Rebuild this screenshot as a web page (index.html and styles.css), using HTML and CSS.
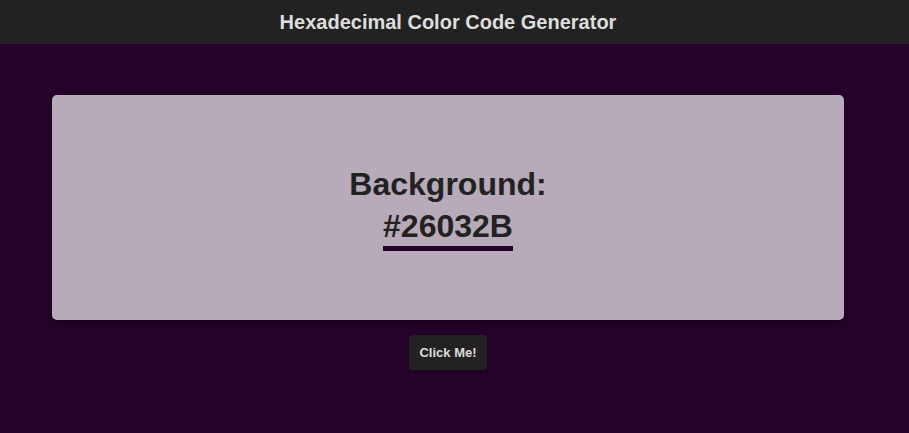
FILE: index.html
```html
<!DOCTYPE html>
<html>
<head>
<meta charset="utf-8">
<title>Hexadecimal Color Code Generator</title>
<link rel="stylesheet" href="styles.css">
</head>
<body>
<header class="topbar">
  <div class="wrap">
    <h1 class="title">Hexadecimal Color Code Generator</h1>
  </div>
</header>
<main class="wrap main">
  <section class="card">
    <p class="label">Background:<br><span class="hex">#26032B</span></p>
  </section>
  <button class="btn">Click Me!</button>
</main>
</body>
</html>
```
FILE: styles.css
```css
html, body {
  margin: 0;
  padding: 0;
}
body {
  background: #26032b;
  font-family: "Liberation Sans", Arial, sans-serif;
  min-height: 433px;
}
.wrap {
  width: 896px;
}
.topbar {
  background: #222222;
  height: 44px;
}
.topbar .wrap {
  height: 44px;
  display: flex;
  align-items: center;
  justify-content: center;
}
.title {
  margin: 0;
  color: #dddddd;
  font-size: 20px;
  font-weight: bold;
}
.main {
  display: flex;
  flex-direction: column;
  align-items: center;
  padding-top: 51px;
}
.card {
  width: 792px;
  height: 225px;
  background: #b7aab9;
  border-radius: 5px;
  box-shadow: 0 4px 10px rgba(0, 0, 0, 0.35);
  display: flex;
  align-items: center;
  justify-content: center;
}
.label {
  margin: 0;
  padding-bottom: 5px;
  text-align: center;
  color: #222222;
  font-size: 32px;
  font-weight: bold;
  line-height: 42px;
}
.hex {
  padding-bottom: 2px;
  border-bottom: 5px solid #26032b;
}
.btn {
  margin-top: 15px;
  background: #222222;
  color: #dddddd;
  border: none;
  border-radius: 4px;
  font-family: "Liberation Sans", Arial, sans-serif;
  font-weight: bold;
  font-size: 13px;
  height: 35px;
  padding: 0 10px;
  box-shadow: 0 2px 6px rgba(0, 0, 0, 0.3);
}
```
